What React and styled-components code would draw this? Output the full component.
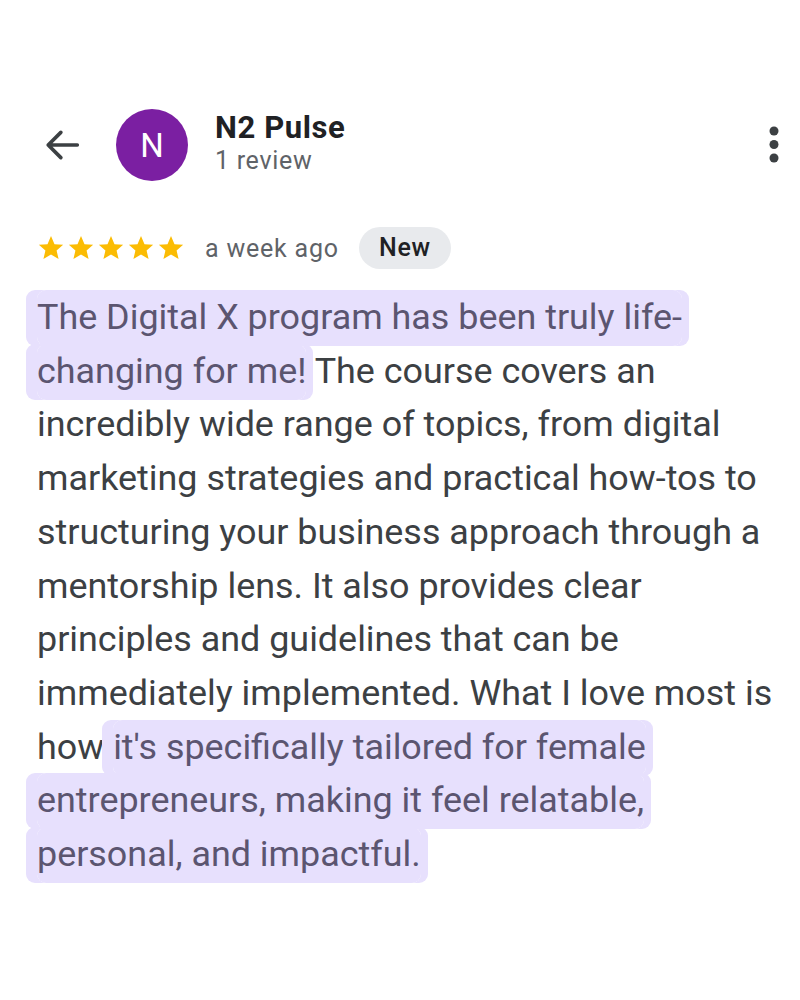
import React from "react";
import styled, { createGlobalStyle } from "styled-components";

const Global = createGlobalStyle`
  html, body { margin: 0; padding: 0; background: #fff; }
  body { font-family: Roboto, "Liberation Sans", Arial, sans-serif; }
`;

const Page = styled.div`
  width: 800px;
  height: 1000px;
  box-sizing: border-box;
  padding: 109px 0 0 37px;
  background: #fff;
`;

const Header = styled.div`
  display: flex;
  align-items: center;
  width: 743px;
  padding-left: 2px;
  box-sizing: border-box;
`;

const IconButton = styled.button`
  border: 0;
  background: none;
  padding: 0;
  display: flex;
  align-items: center;
  justify-content: center;
  cursor: pointer;
`;

const Avatar = styled.div`
  width: 72px;
  height: 72px;
  border-radius: 50%;
  background: #7b1fa2;
  color: #fff;
  display: flex;
  align-items: center;
  justify-content: center;
  font-size: 33px;
  margin-left: 31px;
  flex-shrink: 0;
`;

const NameBlock = styled.div`
  display: flex;
  flex-direction: column;
  margin-left: 27px;
  flex: 1;
  margin-top: -5px;
`;

const Name = styled.div`
  font-size: 31px;
  font-weight: 700;
  letter-spacing: 0.6px;
  color: #202124;
  line-height: 35px;
`;

const Sub = styled.div`
  font-size: 25px;
  letter-spacing: 0.7px;
  color: #5f6368;
  line-height: 31px;
`;

const MetaRow = styled.div`
  display: flex;
  align-items: center;
  margin-top: 46px;
`;

const Stars = styled.div`
  display: flex;
  gap: 2px;
`;

const Ago = styled.span`
  font-size: 25px;
  letter-spacing: 0.8px;
  color: #5f6368;
  margin-left: 20px;
`;

const Chip = styled.span`
  margin-left: 20px;
  background: #e8eaed;
  color: #202124;
  border-radius: 22px;
  font-size: 25px;
  font-weight: 500;
  letter-spacing: 0.8px;
  padding: 9px 20px;
  line-height: 24px;
`;

const Body = styled.p`
  margin: 22px 0 0;
  width: 742px;
  font-size: 35.9px;
  line-height: 53.7px;
  color: #3c4043;
`;

const Hl = styled.span`
  background: #e7e0fd;
  color: #5b5570;
  padding: 6px 0 8px;
  border-radius: 9px;
  box-decoration-break: clone;
  -webkit-box-decoration-break: clone;
  box-shadow: -11px 0 0 #e7e0fd, 7px 0 0 #e7e0fd;
`;

const Star = () => (
  <svg width="28" height="28" viewBox="0 0 24 24">
    <path
      fill="#fbbc04"
      d="M12 1.8l3 6.9 7.4.6-5.6 4.9 1.7 7.3L12 17.6l-6.5 3.9 1.7-7.3L1.6 9.3 9 8.7z"
    />
  </svg>
);

export default function App() {
  return (
    <Page>
      <Global />
      <Header>
        <IconButton aria-label="Back">
          <svg width="46" height="46" viewBox="0 0 24 24">
            <path
              fill="none"
              stroke="#3c4043"
              strokeWidth="1.9"
              strokeLinecap="round"
              strokeLinejoin="round"
              d="M20 12H4.8M11.4 5.4L4.8 12l6.6 6.6"
            />
          </svg>
        </IconButton>
        <Avatar>N</Avatar>
        <NameBlock>
          <Name>N2 Pulse</Name>
          <Sub>1 review</Sub>
        </NameBlock>
        <IconButton aria-label="More">
          <svg width="12" height="38" viewBox="0 0 12 38">
            <circle cx="6" cy="5" r="4.5" fill="#3c4043" />
            <circle cx="6" cy="18.5" r="4.5" fill="#3c4043" />
            <circle cx="6" cy="32" r="4.5" fill="#3c4043" />
          </svg>
        </IconButton>
      </Header>
      <MetaRow>
        <Stars>
          <Star />
          <Star />
          <Star />
          <Star />
          <Star />
        </Stars>
        <Ago>a week ago</Ago>
        <Chip>New</Chip>
      </MetaRow>
      <Body>
        <Hl>The Digital X program has been truly life-changing for me!</Hl>{" "}
        The course covers an incredibly wide range of topics, from digital
        marketing strategies and practical how-tos to structuring your business
        approach through a mentorship lens. It also provides clear principles
        and guidelines that can be immediately implemented. What I love most is
        how{" "}
        <Hl>
          it's specifically tailored for female entrepreneurs, making it feel
          relatable, personal, and impactful.
        </Hl>
      </Body>
    </Page>
  );
}
